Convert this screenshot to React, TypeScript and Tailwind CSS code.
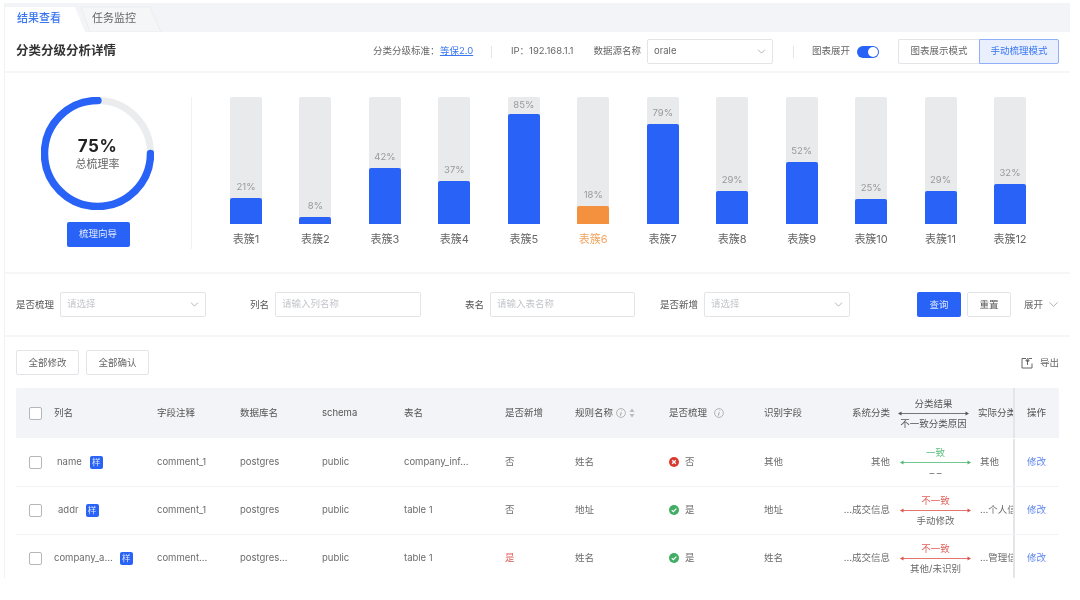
import React from "react";
import { ChevronDown } from "lucide-react";
import clsx from "clsx";

const blue = "#2962f6";

const bars = [
  { name: "表簇1", pct: "21%", h: 26 },
  { name: "表簇2", pct: "8%", h: 7 },
  { name: "表簇3", pct: "42%", h: 56 },
  { name: "表簇4", pct: "37%", h: 43 },
  { name: "表簇5", pct: "85%", h: 110, tight: true },
  { name: "表簇6", pct: "18%", h: 18, warn: true },
  { name: "表簇7", pct: "79%", h: 100 },
  { name: "表簇8", pct: "29%", h: 33 },
  { name: "表簇9", pct: "52%", h: 62 },
  { name: "表簇10", pct: "25%", h: 25 },
  { name: "表簇11", pct: "29%", h: 33 },
  { name: "表簇12", pct: "32%", h: 40 },
];

const rows = [
  {
    col: "name",
    gap: "ml-[15px] gap-2",
    comment: "comment_1",
    db: "postgres",
    table: "company_inf...",
    isNew: "否",
    rule: "姓名",
    done: false,
    field: "其他",
    sys: "其他",
    same: true,
    reason: "– –",
    actual: "其他",
  },
  {
    col: "addr",
    gap: "ml-4 gap-[7px]",
    comment: "comment_1",
    db: "postgres",
    table: "table 1",
    isNew: "否",
    rule: "地址",
    done: true,
    field: "地址",
    sys: "...成交信息",
    same: false,
    reason: "手动修改",
    actual: "...个人信息",
  },
  {
    col: "company_a...",
    gap: "ml-3 gap-[7px]",
    comment: "comment...",
    db: "postgres...",
    table: "table 1",
    isNew: "是",
    rule: "姓名",
    done: true,
    field: "姓名",
    sys: "...成交信息",
    same: false,
    reason: "其他/未识别",
    actual: "...管理信息",
  },
];

const gridCols =
  "grid grid-cols-[141px_83px_82px_82px_101px_70px_94px_95px_66px_60px_88px_35px_46px] items-center";

const Checkbox = () => (
  <span className="ml-[13px] h-[13px] w-[13px] shrink-0 rounded-[2px] border border-[#b4b6ba] bg-white" />
);

const Arrow = ({ color }: { color: string }) => (
  <svg width="71" height="5" viewBox="0 0 71 5" className="block">
    <line x1="1" y1="2.5" x2="70" y2="2.5" stroke={color} strokeWidth="0.8" />
    <path d="M0 2.5 3.5 0.5V4.5ZM71 2.5 67.5 0.5V4.5Z" fill={color} />
  </svg>
);

const InfoIcon = () => (
  <svg width="10" height="10" viewBox="0 0 10 10" fill="none" stroke="#999" strokeWidth="0.7">
    <circle cx="5" cy="5" r="4.4" />
    <path d="M5.7 2.4 5.5 2.9M5.2 4.2 4.4 7.6" strokeWidth="0.9" />
  </svg>
);

const SortIcon = () => (
  <svg width="6" height="10" viewBox="0 0 6 10" fill="#b9bbc0">
    <path d="M3 0.5 5.5 4H0.5ZM3 9.5 0.5 6H5.5Z" />
  </svg>
);

const StatusIcon = ({ ok }: { ok: boolean }) =>
  ok ? (
    <svg width="10" height="10" viewBox="0 0 10 10" className="-mt-[2px]">
      <circle cx="5" cy="5" r="5" fill="#3fae62" />
      <path d="M2.7 5.1 4.4 6.7 7.4 3.6" fill="none" stroke="#fff" strokeWidth="1.3" />
    </svg>
  ) : (
    <svg width="10" height="10" viewBox="0 0 10 10" className="-mt-[2px]">
      <circle cx="5" cy="5" r="5" fill="#dc3a30" />
      <path d="M3.2 3.2 6.8 6.8M6.8 3.2 3.2 6.8" fill="none" stroke="#fff" strokeWidth="1.3" />
    </svg>
  );

const SelectBox = ({ text, placeholder, className }: { text: string; placeholder?: boolean; className: string }) => (
  <div
    className={clsx(
      "flex h-[25px] items-center justify-between rounded-[2px] border border-[#e2e4e8] bg-white pl-[6px] pr-[4px]",
      className
    )}
  >
    <span className={placeholder ? "text-[9.5px] text-[#c4c6ca]" : "text-[9.5px] text-[#666]"}>{text}</span>
    <ChevronDown size={13} strokeWidth={1} className="text-[#777]" />
  </div>
);

const TextBox = ({ text }: { text: string }) => (
  <div className="flex h-[25px] flex-1 items-center rounded-[2px] border border-[#e2e4e8] bg-white pl-[6px] text-[9.5px] text-[#c4c6ca]">
    {text}
  </div>
);

const Ring = () => (
  <div className="relative h-[113px] w-[113px]">
    <svg width="113" height="113" viewBox="0 0 113 113" fill="none">
      <circle cx="56.5" cy="56.5" r="53" stroke="#ebecee" strokeWidth="7" />
      <circle
        cx="56.5"
        cy="56.5"
        r="53"
        stroke={blue}
        strokeWidth="7.5"
        strokeLinecap="round"
        strokeDasharray="249.8 333"
      />
    </svg>
    <div className="absolute inset-0 flex flex-col items-center justify-center">
      <span className="text-[17px] font-bold leading-[20px] tracking-[0.5px] text-[#222]">75%</span>
      <span className="text-[11px] leading-[16px] text-[#666]">总梳理率</span>
    </div>
  </div>
);

export default function App() {
  return (
    <div className="h-[578px] w-[1080px] overflow-hidden bg-white pl-1 pr-[10px] pt-[3px] font-['Inter','Noto_Sans_CJK_SC',sans-serif] text-[#666] blur-[0.45px]">
      <div className="h-full border-l border-[#f0f1f3]">
        {/* Tabs */}
        <div className="relative flex h-[29px] bg-[#f3f4f7]">
          <svg width="170" height="29" viewBox="0 0 170 29" className="absolute left-0 top-0">
            <path d="M76 4H145L156 29H85Z" fill="#f5f6f8" stroke="#ebedf0" />
            <path d="M0 4H70L80 29H0Z" fill="#fff" />
          </svg>
          <span className="relative ml-3 mt-[4px] text-[11px] font-medium leading-[22px] text-[#3b78f0]">结果查看</span>
          <span className="relative ml-[31px] mt-[4px] text-[11px] leading-[22px] text-[#666]">任务监控</span>
        </div>

        {/* Title bar */}
        <div className="flex h-[41px] items-center border-b-2 border-[#f5f6f8] pl-[11px] pr-[11px]">
          <h1 className="text-[12.5px] font-semibold text-[#333]">分类分级分析详情</h1>
          <div className="ml-auto flex items-center text-[9.5px]">
            <span className="w-[67px] whitespace-nowrap">分类分级标准：</span>
            <span className="w-[32px] whitespace-nowrap text-[#3b78f0] underline">等保2.0</span>
            <span className="ml-[19px] h-[12px] w-px bg-[#e4e5e8]" />
            <span className="ml-[19px] whitespace-nowrap">IP：192.168.1.1</span>
            <span className="ml-[20px] whitespace-nowrap">数据源名称</span>
            <SelectBox text="orale" className="ml-[6px] w-[126px]" />
            <span className="ml-[20px] h-[12px] w-px bg-[#e4e5e8]" />
            <span className="ml-[18px] whitespace-nowrap">图表展开</span>
            <span className="ml-[7px] flex h-[12px] w-[22px] items-center justify-end rounded-full bg-[#2962f6] pr-[1px]">
              <span className="h-[10px] w-[10px] rounded-full bg-white" />
            </span>
            <div className="ml-[19px] flex h-[25px]">
              <span className="flex w-[81px] items-center justify-center rounded-l-[2px] border border-r-0 border-[#e2e4e8]">
                图表展示模式
              </span>
              <span className="flex w-[80px] items-center justify-center rounded-r-[2px] border border-[#8fb0f6] bg-[#e9effd] text-[#3b78f0]">
                手动梳理模式
              </span>
            </div>
          </div>
        </div>

        {/* Charts */}
        <div className="flex h-[201px] border-b-2 border-[#f5f6f8] pt-[24px]">
          <div className="flex h-[152px] w-[187px] flex-col items-center border-r border-[#f0f1f3]">
            <div className="mr-[1px]">
              <Ring />
            </div>
            <button className="mt-[12px] h-[25px] w-[63px] rounded-[2px] bg-[#2962f6] text-[9.5px] text-[#dfe8ff]">
              梳理向导
            </button>
          </div>
          <div className="ml-[38px] flex h-[152px] w-[796px] justify-between">
            {bars.map((b) => (
              <div key={b.name} className="flex w-8 flex-col items-center">
                <div className="flex h-[127px] w-8 flex-col items-center justify-end rounded-t-[2px] bg-[#e9eaec]">
                  <span className={clsx("text-[9.5px] leading-[12px] text-[#999]", b.tight ? "mb-[3px]" : "mb-[5px]")}>
                    {b.pct}
                  </span>
                  <div
                    className={clsx("w-8 rounded-t-[2px]", b.warn ? "bg-[#f3913f]" : "bg-[#2962f6]")}
                    style={{ height: b.h }}
                  />
                </div>
                <span
                  className={clsx(
                    "mt-[7px] whitespace-nowrap text-[11px] leading-[16px]",
                    b.warn ? "text-[#f3a562]" : "text-[#666]"
                  )}
                >
                  {b.name}
                </span>
              </div>
            ))}
          </div>
        </div>

        {/* Filters */}
        <div className="flex h-[63px] items-center border-b-2 border-[#f5f6f8] px-[11px] text-[9.5px] text-[#555]">
          <div className="flex w-[190px] shrink-0 items-center gap-[6px]">
            <span className="whitespace-nowrap pt-[1px]">是否梳理</span>
            <SelectBox text="请选择" placeholder className="flex-1" />
          </div>
          <div className="ml-[44px] flex w-[171px] shrink-0 items-center gap-[6px]">
            <span className="whitespace-nowrap pt-[1px]">列名</span>
            <TextBox text="请输入列名称" />
          </div>
          <div className="ml-[44px] flex w-[170px] shrink-0 items-center gap-[6px]">
            <span className="whitespace-nowrap pt-[1px]">表名</span>
            <TextBox text="请输入表名称" />
          </div>
          <div className="ml-[25px] flex w-[190px] shrink-0 items-center gap-[6px]">
            <span className="whitespace-nowrap pt-[1px]">是否新增</span>
            <SelectBox text="请选择" placeholder className="flex-1" />
          </div>
          <button className="ml-[67px] h-[25px] w-[44px] shrink-0 rounded-[2px] bg-[#2962f6] pt-[1px] text-[#dfe8ff]">查询</button>
          <button className="ml-[6px] h-[25px] w-[44px] shrink-0 rounded-[2px] border border-[#e2e4e8] pt-[1px]">重置</button>
          <span className="ml-[13px] shrink-0 whitespace-nowrap pt-[1px] text-[#666]">展开</span>
          <ChevronDown size={15} strokeWidth={0.9} className="ml-[3px] shrink-0 text-[#777]" />
        </div>

        {/* Toolbar */}
        <div className="flex items-center px-[11px] pt-[13px] text-[9.5px]">
          <button className="h-[25px] w-[63px] rounded-[2px] border border-[#e2e4e8] pt-[1px]">全部修改</button>
          <button className="ml-[7px] h-[25px] w-[63px] rounded-[2px] border border-[#e2e4e8] pt-[1px]">全部确认</button>
          <svg width="12" height="12" viewBox="0 0 12 12" fill="none" stroke="#555" strokeWidth="0.9" className="ml-auto mt-[1px]">
            <path d="M5 1.5H1V11H11V6.5" />
            <path d="M6.5 8V3M6.5 1.5 4.8 4H8.2Z" />
            <path d="M7.5 1.5H11" />
          </svg>
          <span className="ml-[7px] whitespace-nowrap pt-[1px]">导出</span>
        </div>

        {/* Table */}
        <div className="mx-[11px] mt-[13px] text-[9.5px]">
          <div className={clsx(gridCols, "h-[50px] rounded-t-[2px] bg-[#f3f4f8] text-[#555]")}>
            <div className="flex items-center">
              <Checkbox />
              <span className="ml-3">列名</span>
            </div>
            <span>字段注释</span>
            <span>数据库名</span>
            <span>schema</span>
            <span>表名</span>
            <span>是否新增</span>
            <span className="flex items-center gap-[3px]">
              规则名称
              <InfoIcon />
              <SortIcon />
            </span>
            <span className="flex items-center gap-[7px]">
              是否梳理
              <InfoIcon />
            </span>
            <span>识别字段</span>
            <span className="text-right">系统分类</span>
            <div className="flex flex-col items-center pr-[1px] leading-[13px]">
              <span>分类结果</span>
              <div className="my-[1px]">
                <Arrow color="#555" />
              </div>
              <span className="whitespace-nowrap">不一致分类原因</span>
            </div>
            <span className="overflow-hidden whitespace-nowrap">实际分类</span>
            <span className="flex h-full items-center border-l-2 border-[#e4e5e9] pl-[12px]">操作</span>
          </div>
          <div className="pt-[1px]">
            {rows.map((r) => (
              <div key={r.col} className={clsx(gridCols, "h-[48px] border-b border-[#f2f3f5] text-[#6b6b6b]")}>
                <div className="flex items-center">
                  <Checkbox />
                  <span className={clsx("flex items-center whitespace-nowrap", r.gap)}>
                    {r.col}
                    <span className="flex h-[13px] w-[13px] items-center justify-center rounded-[2px] bg-[#2962f6] text-[8.5px] text-[#dfe8ff]">
                      样
                    </span>
                  </span>
                </div>
                <span>{r.comment}</span>
                <span>{r.db}</span>
                <span>public</span>
                <span>{r.table}</span>
                <span className={r.isNew === "是" ? "text-[#e0605a]" : ""}>{r.isNew}</span>
                <span>{r.rule}</span>
                <span className="flex items-center gap-[6px]">
                  <StatusIcon ok={r.done} />
                  {r.done ? "是" : "否"}
                </span>
                <span>{r.field}</span>
                <span className="whitespace-nowrap text-right">{r.sys}</span>
                <div className="flex flex-col items-center pl-[3px] leading-[13px]">
                  <span className={r.same ? "text-[#5cbf7c]" : "text-[#e0605a]"}>{r.same ? "一致" : "不一致"}</span>
                  <div className="my-[1px]">
                    <Arrow color={r.same ? "#4fb872" : "#e0524b"} />
                  </div>
                  <span className="whitespace-nowrap">{r.reason}</span>
                </div>
                <span className="overflow-hidden whitespace-nowrap pl-[2px]">{r.actual}</span>
                <span className="flex h-full items-center border-l-2 border-[#e4e5e9] pl-[12px] text-[#5b86ee]">修改</span>
              </div>
            ))}
          </div>
        </div>
      </div>
    </div>
  );
}
